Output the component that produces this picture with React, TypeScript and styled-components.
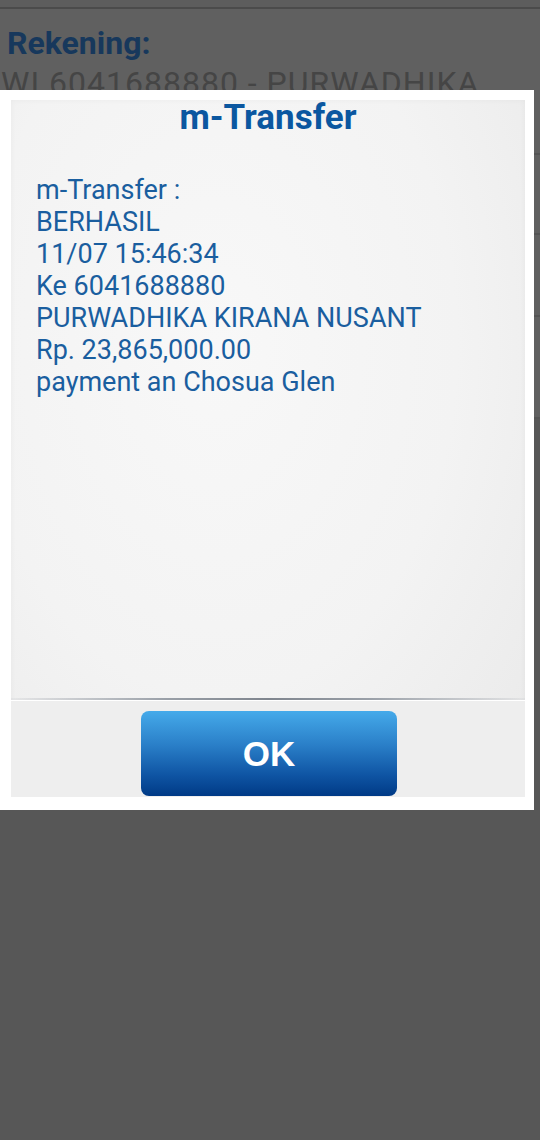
import React from "react";
import styled, { createGlobalStyle } from "styled-components";

const Global = createGlobalStyle`
  html, body { margin: 0; padding: 0; background: #575757; }
  * { box-sizing: border-box; }
`;

const Page = styled.div`
  position: relative;
  width: 540px;
  height: 1140px;
  overflow: hidden;
  background: #575757;
  font-family: Roboto, "Noto Sans", Arial, sans-serif;
`;

const Screen = styled.div`
  display: flex;
  flex-direction: column;
`;

const TopBar = styled.div`
  height: 9px;
  background: #5d5d5d;
  border-bottom: 2px solid #4b4b4b;
`;

const Content = styled.div`
  background: #606060;
  display: flex;
  flex-direction: column;
`;

const AccountBlock = styled.div`
  height: 146px;
  padding: 15px 0 0 0;
  border-bottom: 2px solid #545454;
`;

const Label = styled.div`
  font-size: 32px;
  font-weight: 700;
  color: #17385c;
  line-height: 38px;
  padding-left: 7px;
`;

const Value = styled.div`
  font-size: 32px;
  color: #454545;
  line-height: 34px;
  margin-top: 4px;
  white-space: nowrap;
  letter-spacing: 1px;
  padding-left: 1px;
`;

const Row = styled.div<{ $h: number }>`
  height: ${(p) => p.$h}px;
  border-bottom: 2px solid #545454;
`;

const Dialog = styled.div`
  position: absolute;
  top: 90px;
  left: 0;
  width: 534px;
  height: 720px;
  background: #ffffff;
  padding: 10px 9px 13px 11px;
  display: flex;
`;

const Panel = styled.div`
  flex: 1;
  display: flex;
  flex-direction: column;
  background:
    radial-gradient(ellipse at 40% 35%, #f8f8f8 0%, #f3f3f3 55%, #e9e9e9 100%);
  box-shadow: inset 0 0 6px rgba(0, 0, 0, 0.04);
`;

const Title = styled.div`
  text-align: center;
  font-size: 35px;
  font-weight: 700;
  color: #0b57a0;
  line-height: 36px;
`;

const Body = styled.div`
  flex: 1;
  padding: 38px 0 0 25px;
  display: flex;
  flex-direction: column;
`;

const Line = styled.div`
  font-size: 27px;
  line-height: 32px;
  color: #1a5e9f;
  white-space: nowrap;
`;

const Divider = styled.div`
  height: 3px;
  background: linear-gradient(
    90deg,
    rgba(150, 155, 165, 0.1) 0%,
    #9aa0a8 30%,
    #7f858e 50%,
    #9aa0a8 70%,
    rgba(150, 155, 165, 0.1) 100%
  );
  border-bottom: 1px solid #ffffff;
`;

const Footer = styled.div`
  height: 96px;
  display: flex;
  justify-content: center;
  padding: 10px 0 0 2px;
  background: #eeeeee;
`;

const OkButton = styled.button`
  width: 256px;
  height: 85px;
  border: none;
  border-radius: 8px;
  background: linear-gradient(180deg, #45aaea 0%, #2a7fc8 40%, #0f55a4 75%, #003a86 100%);
  color: #ffffff;
  font-family: "Liberation Sans", Arial, sans-serif;
  font-size: 35px;
  font-weight: 700;
  padding: 0;
  cursor: pointer;
`;

const lines = [
  "m-Transfer :",
  "BERHASIL",
  "11/07 15:46:34",
  "Ke 6041688880",
  "PURWADHIKA KIRANA NUSANT",
  "Rp. 23,865,000.00",
  "payment an Chosua Glen",
];

export default function App() {
  return (
    <Page>
      <Global />
      <Screen>
        <TopBar />
        <Content>
          <AccountBlock>
            <Label>Rekening:</Label>
            <Value>WI 6041688880 - PURWADHIKA</Value>
          </AccountBlock>
          <Row $h={80} />
          <Row $h={82} />
          <Row $h={102} />
        </Content>
      </Screen>
      <Dialog>
        <Panel>
          <Title>m-Transfer</Title>
          <Body>
            {lines.map((l) => (
              <Line key={l}>{l}</Line>
            ))}
          </Body>
          <Divider />
          <Footer>
            <OkButton>OK</OkButton>
          </Footer>
        </Panel>
      </Dialog>
    </Page>
  );
}
